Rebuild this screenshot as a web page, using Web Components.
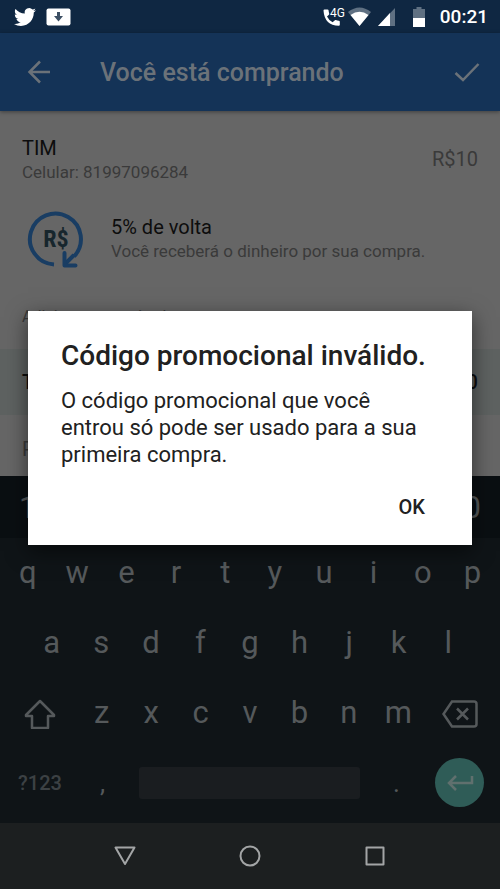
<!DOCTYPE html>
<html lang="pt-BR">
<head>
<meta charset="utf-8">
<meta name="viewport" content="width=device-width, initial-scale=1">
<title>Você está comprando</title>
<style>
html, body { height: 100%; }
body { margin: 0; background: #666; font-family: Roboto, "Liberation Sans", sans-serif; }
</style>
</head>
<body>
<phone-screen></phone-screen>
<script>
function define(name, html, setup) {
  const template = document.createElement('template');
  template.innerHTML = html;
  customElements.define(name, class extends HTMLElement {
    constructor() {
      super();
      this.attachShadow({ mode: 'open' }).append(template.content.cloneNode(true));
    }
    connectedCallback() {
      if (setup) setup(this, this.shadowRoot);
    }
  });
}

define('status-bar', `
<style>
:host { display: flex; align-items: center; justify-content: space-between; height: 33px; padding: 0 12px 0 14px; background: #0f2742; color: #fff; }
.group { display: flex; align-items: center; }
.left { gap: 10px; }
svg { display: block; }
.call { margin-right: 3px; }
.wifi { margin-right: 7px; }
.signal { margin-right: 18px; }
.battery { margin-right: 15px; }
time { font-size: 19px; line-height: 24px; font-weight: 500; }
</style>
<div class="group left">
  <svg width="22" height="22" viewBox="0 0 24 24" fill="#fff" aria-label="Twitter"><path d="M23.95 4.57a10 10 0 0 1-2.82.77 4.96 4.96 0 0 0 2.16-2.72c-.95.55-2 .95-3.13 1.18a4.92 4.92 0 0 0-8.38 4.48C7.69 8.09 4.07 6.13 1.64 3.16a4.82 4.82 0 0 0-.67 2.48c0 1.71.87 3.21 2.19 4.1a4.9 4.9 0 0 1-2.23-.62v.06a4.92 4.92 0 0 0 3.95 4.83 5 5 0 0 1-2.21.08 4.94 4.94 0 0 0 4.6 3.42A9.87 9.87 0 0 1 0 19.54a13.99 13.99 0 0 0 7.56 2.21c9.05 0 14-7.5 14-13.98l-.02-.64a9.94 9.94 0 0 0 2.41-2.56z"/></svg>
  <svg width="25" height="18" viewBox="0 0 25 18" aria-label="Download"><rect x=".5" y=".5" width="24" height="17" rx="2" fill="#fff"/><path d="M11 4h3v4h3l-4.500 5.500L8 8h3z" fill="#3c4f64"/></svg>
</div>
<div class="group">
  <svg class="call" width="23" height="22" viewBox="0 0 23 22"><path d="M1.500 4.500q0-1 1-1h3q1 0 1.100 1 .1 1.600.6 3 .2.700-.3 1.200L5 10.500q1.800 3.800 5.600 5.800l2-1.900q.5-.5 1.200-.3 1.500.5 3 .6 1 .1 1 1.100v3q0 1-1 1Q2.500 19.500 1.500 4.500z" fill="#fff"/><text x="8" y="11" font-size="12" fill="#fff" font-family="Roboto, sans-serif">4G</text></svg>
  <svg class="wifi" width="23" height="20" viewBox="0 0 23 20"><path d="M11.500 19L0 5q11.500-9 23 0z" fill="#5f7082"/><path d="M11.500 19L2.500 8q9-6.500 18 0z" fill="#fff"/></svg>
  <svg class="signal" width="17" height="18" viewBox="0 0 17 18"><path d="M0 18L17 0v18z" fill="#5f7082"/><path d="M0 18L12 5v13z" fill="#fff"/></svg>
  <svg class="battery" width="12" height="20" viewBox="0 0 12 20"><path d="M0 2h3.500V0h5v2H12v9H0z" fill="#5f7082"/><path d="M0 11h12v9H0z" fill="#fff"/></svg>
  <time>00:21</time>
</div>`);

define('app-bar', `
<style>
:host { display: flex; align-items: center; height: 78px; padding: 0 18px 0 24px; background: #143357; color: #6b7279; box-shadow: 0 1px 4px #0006; position: relative; box-sizing: border-box; }
button { display: block; border: 0; padding: 0; background: none; color: inherit; }
svg { display: block; fill: none; stroke: currentColor; stroke-width: 2; }
h1 { flex: 1; margin: 2px 0 0 46px; font-size: 25px; line-height: 32px; font-weight: 500; }
</style>
<button aria-label="Voltar"><svg width="30" height="30" viewBox="0 0 30 30"><path d="M16 4.500L5.500 15 16 25.500M5.500 15H26" stroke-width="2.500"/></svg></button>
<h1>Você está comprando</h1>
<button aria-label="Confirmar"><svg width="30" height="30" viewBox="0 0 30 30"><path d="M3.500 16l7.500 7L26.500 7" stroke-width="2.500"/></svg></button>`);

define('purchase-summary', `
<style>
:host { display: flex; align-items: flex-start; justify-content: space-between; padding: 26px 22px 0; color: #3a3a3a; }
h2, p { margin: 0; font-weight: 400; }
h2 { font-size: 20px; line-height: 22px; color: #0d0d0d; }
p { font-size: 17px; line-height: 27px; }
.price { font-size: 20px; line-height: 44px; }
</style>
<div><h2><slot name="title"></slot></h2><p><slot name="detail"></slot></p></div>
<span class="price"><slot name="price"></slot></span>`);

define('cashback-info', `
<style>
:host { display: flex; align-items: center; gap: 25px; padding: 23px 26px 0; color: #3a3a3a; }
svg { display: block; flex: none; }
h2, p { margin: 0; font-weight: 400; }
h2 { font-size: 20px; line-height: 24px; color: #0d0d0d; }
p { font-size: 17px; line-height: 24px; }
</style>
<svg width="60" height="60" viewBox="0 0 60 60"><path d="M28 55.500A25.500 25.500 0 1 1 48 47.500M48 46L39 55" fill="none" stroke="#193d63" stroke-width="4"/><path d="M38.500 44v12.500h11" fill="none" stroke="#193d63" stroke-width="4" stroke-linecap="round" stroke-linejoin="round"/><text x="30" y="38" font-size="24" text-anchor="middle" font-weight="700" font-family="'Roboto Condensed', 'Liberation Sans Narrow', Roboto, sans-serif" fill="#17262d">R$</text></svg>
<div><h2><slot name="title"></slot></h2><p><slot name="detail"></slot></p></div>`);

define('total-row', `
<style>
:host { display: flex; align-items: center; justify-content: space-between; height: 66px; padding: 0 22px; background: #5e6261; color: #0d0d0d; font-size: 20px; font-weight: 500; }
</style>
<slot name="label"></slot><slot name="value"></slot>`);

define('key-board', `
<style>
:host { display: flex; flex-direction: column; height: 347px; background: #0f1417; color: #55595b; }
.row { display: flex; flex: 0 0 70px; padding: 0 3px; }
.row.numbers { flex-basis: 62px; justify-content: space-between; background: #0a0f12; }
.row.middle { padding: 0 27px; }
.row.last { flex: 1; align-items: center; padding: 0 0 6px; }
button { flex: 1 1 0; min-width: 0; border: 0; padding: 0; background: none; color: inherit; font: 400 31px/40px Roboto, "Liberation Sans", sans-serif; display: flex; align-items: center; justify-content: center; }
.row.numbers button { flex: 0 0 10%; padding-top: 2px; }
.wide { flex-grow: 1.5; }
.row.last .symbols { flex: 0 0 16%; font-size: 20px; color: #3c4144; font-weight: 500; }
.row.last .mark { flex: 0 0 9%; font-size: 26px; }
.row.last .space { flex: 1; height: 32px; margin: 0 14px; border-radius: 3px; background: #1a1d20; }
.row.last .enter { flex: 0 0 49px; height: 49px; margin: 0 16px; border-radius: 50%; background: #2f5c57; color: #60706e; }
svg { display: block; fill: none; stroke: currentColor; stroke-width: 2; }
</style>
<div class="row numbers"></div>
<div class="row top"></div>
<div class="row middle"></div>
<div class="row lower"></div>
<div class="row last">
  <button class="symbols">?123</button><button class="mark">,</button><button class="space" aria-label="Espaço"></button><button class="mark">.</button>
  <button class="enter" aria-label="Enter"><svg width="28" height="18" viewBox="0 0 28 18"><path d="M26 2v7H3M10 2L3 9l7 7" stroke-width="2.500"/></svg></button>
</div>`, (host, root) => {
  const fill = (name, keys) => {
    const row = root.querySelector('.' + name);
    if (row.children.length) return;
    for (const key of keys) {
      const button = document.createElement('button');
      button.textContent = key;
      row.append(button);
    }
  };
  fill('numbers', '10');
  fill('top', 'qwertyuiop');
  fill('middle', 'asdfghjkl');
  fill('lower', 'zxcvbnm');
  const icon = (label, svg) => `<button class="wide" aria-label="${label}">${svg}</button>`;
  const lower = root.querySelector('.lower');
  if (lower.querySelector('.wide')) return;
  lower.insertAdjacentHTML('afterbegin', icon('Maiúsculas', '<svg width="32" height="32" viewBox="0 0 32 32"><path d="M16 4L2 18v1h6v12h16V19h6v-1z" stroke-width="2.500" stroke-linejoin="round"/></svg>'));
  lower.insertAdjacentHTML('beforeend', icon('Apagar', '<svg width="36" height="30" viewBox="0 0 36 30"><path d="M10 3.500h22q2.500 0 2.500 2.500v20q0 2.500-2.500 2.500H10L1.500 16zM15 10.500l11 11m0-11L15 21.500" stroke-width="2.500"/></svg>'));
});

define('nav-bar', `
<style>
:host { display: flex; align-items: center; height: 66px; padding: 0 62px; box-sizing: border-box; background: #1c1f20; color: #a3a5a6; }
button { flex: 1; display: flex; justify-content: center; border: 0; padding: 0; background: none; color: inherit; }
svg { display: block; fill: none; stroke: currentColor; stroke-width: 2; stroke-linejoin: round; }
</style>
<button aria-label="Voltar"><svg width="22" height="22" viewBox="0 0 22 22"><path d="M1.500 2.500h19L11 19z"/></svg></button>
<button aria-label="Início"><svg width="22" height="22" viewBox="0 0 22 22"><circle cx="11" cy="11" r="9.500"/></svg></button>
<button aria-label="Recentes"><svg width="22" height="22" viewBox="0 0 22 22"><path d="M2.500 2.500h17v17h-17z"/></svg></button>`);

define('alert-dialog', `
<style>
:host { display: block; margin: 0 28px; padding: 29px 33px 18px; background: #fff; color: #212121; box-shadow: 0 6px 20px #0008; }
h2 { margin: 0; font-size: 28px; line-height: 32px; font-weight: 500; }
p { margin: 15px 16px 0 0; font-size: 22px; line-height: 27px; }
footer { display: flex; justify-content: flex-end; margin-top: 19px; }
button { border: 0; padding: 0 14px; background: none; color: inherit; font: 500 20px/40px Roboto, "Liberation Sans", sans-serif; }
</style>
<section role="alertdialog" aria-labelledby="title">
  <h2 id="title"><slot name="title"></slot></h2>
  <p><slot></slot></p>
  <footer><button>OK</button></footer>
</section>`);

define('phone-screen', `
<style>
:host { display: flex; flex-direction: column; min-height: 100vh; background: #666; }
main { flex: 1; display: flex; flex-direction: column; position: relative; }
.content { flex: 1; display: flex; flex-direction: column; }
.note, .extra { margin: 0; padding: 0 22px; color: #3a3a3a; font-size: 16px; }
.note { line-height: 20px; margin: 38px 0 22px; }
.extra { font-size: 20px; line-height: 24px; padding-top: 22px; }
.overlay { position: absolute; inset: 0; display: flex; flex-direction: column; justify-content: center; }
</style>
<status-bar></status-bar>
<main>
  <app-bar></app-bar>
  <div class="content">
    <purchase-summary><span slot="title">TIM</span><span slot="detail">Celular: 81997096284</span><span slot="price">R$10</span></purchase-summary>
    <cashback-info><span slot="title">5% de volta</span><span slot="detail">Você receberá o dinheiro por sua compra.</span></cashback-info>
    <p class="note">Adicionar um método</p>
    <total-row><span slot="label">Total</span><span slot="value">R$10</span></total-row>
    <p class="extra">P</p>
  </div>
  <key-board></key-board>
  <div class="overlay">
    <alert-dialog><span slot="title">Código promocional inválido.</span>O código promocional que você entrou só pode ser usado para a sua primeira compra.</alert-dialog>
  </div>
</main>
<nav-bar></nav-bar>`);
</script>
</body>
</html>
